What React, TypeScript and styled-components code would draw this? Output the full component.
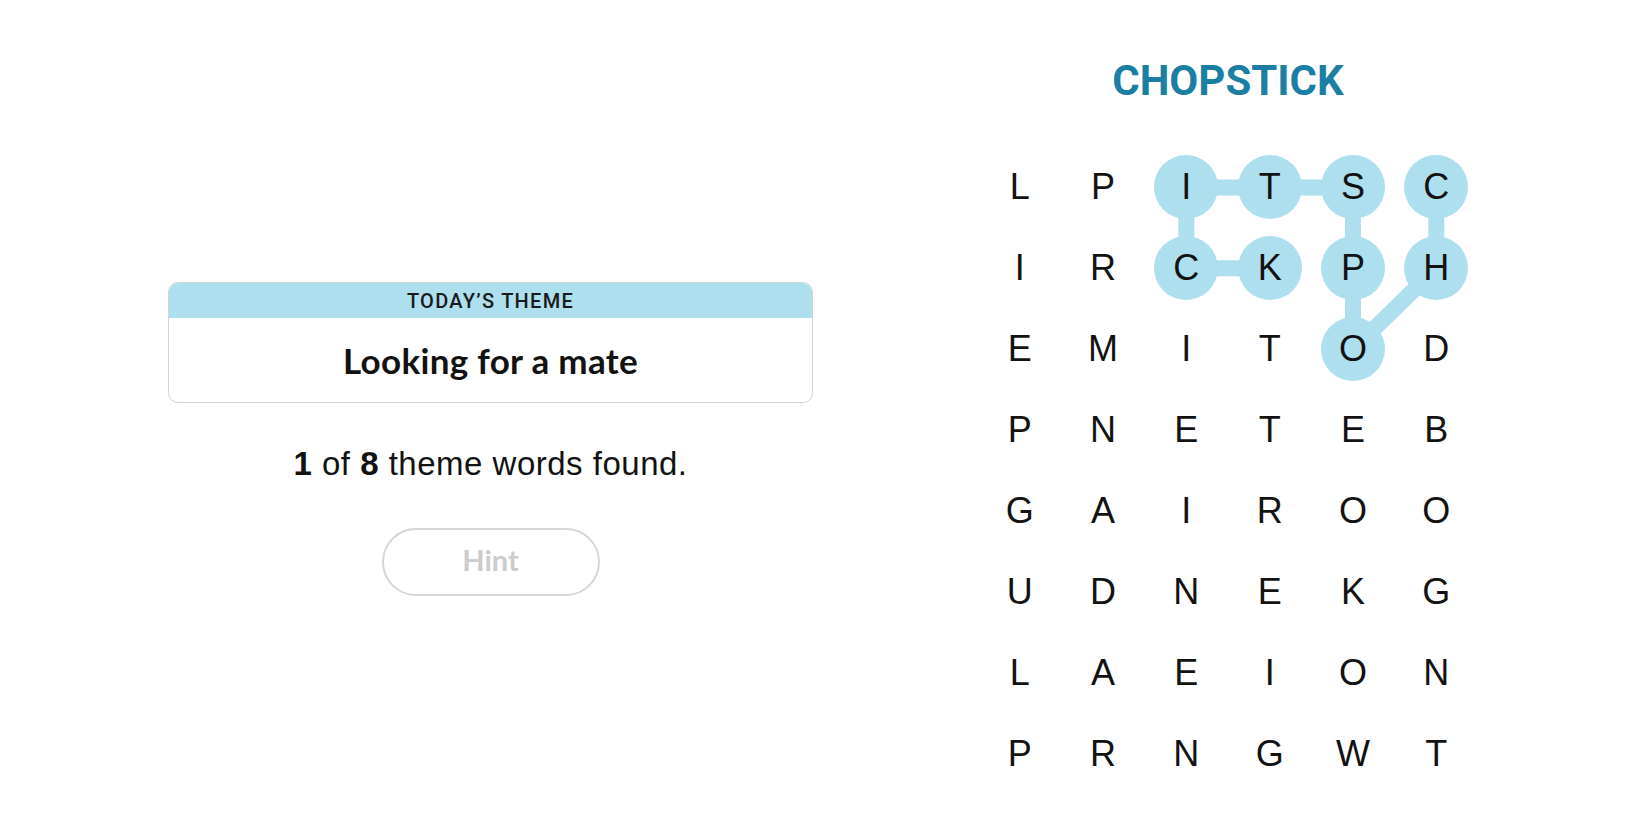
import React from "react"
import styled, { createGlobalStyle } from "styled-components"

const COL_W = 83.33
const ROW_H = 80.9

const grid = [
  "LPITSC",
  "IRCKPH",
  "EMITOD",
  "PNETEB",
  "GAIROO",
  "UDNEKG",
  "LAEION",
  "PRNGWT",
]

// found word path, [col, row]
const path: [number, number][] = [
  [5, 0],
  [5, 1],
  [4, 2],
  [4, 1],
  [4, 0],
  [3, 0],
  [2, 0],
  [2, 1],
  [3, 1],
]

const isFound = (c: number, r: number) =>
  path.some(([pc, pr]) => pc === c && pr === r)

const GlobalStyle = createGlobalStyle`
  html, body {
    margin: 0;
    padding: 0;
    background: #ffffff;
  }
  body {
    font-family: "Liberation Sans", Arial, sans-serif;
    color: #121212;
  }
`

export default function App() {
  const points = path
    .map(([c, r]) => `${COL_W / 2 + COL_W * c},${ROW_H / 2 + ROW_H * r}`)
    .join(" ")

  return (
    <>
      <GlobalStyle />
      <Page>
        <LeftColumn>
          <ThemeCard>
            <ThemeHeader>TODAY’S THEME</ThemeHeader>
            <ThemeBody>Looking for a mate</ThemeBody>
          </ThemeCard>
          <Progress>
            <b>1</b> of <b>8</b> theme words found.
          </Progress>
          <HintButton disabled>Hint</HintButton>
        </LeftColumn>

        <RightColumn>
          <CurrentWord>CHOPSTICK</CurrentWord>
          <Board>
            <Connectors viewBox={`0 0 ${COL_W * 6} ${ROW_H * 8}`}>
              <polyline
                points={points}
                fill="none"
                stroke="#aedfee"
                strokeWidth={16}
                strokeLinejoin="round"
                strokeLinecap="round"
              />
            </Connectors>
            {grid.map((row, r) =>
              row.split("").map((ch, c) => (
                <Cell key={`${r}-${c}`}>
                  <Letter $found={isFound(c, r)}>{ch}</Letter>
                </Cell>
              ))
            )}
          </Board>
        </RightColumn>
      </Page>
    </>
  )
}

const Page = styled.div`
  display: flex;
  align-items: flex-start;
  gap: 165px;
  padding-left: 168px;
  min-height: 825px;
  box-sizing: border-box;
`

const LeftColumn = styled.div`
  width: 645px;
  margin-top: 282px;
  display: flex;
  flex-direction: column;
  align-items: center;
`

const ThemeCard = styled.div`
  width: 100%;
  border: 1px solid #d3d3d3;
  border-radius: 10px;
  overflow: hidden;
  box-sizing: border-box;
`

const ThemeHeader = styled.div`
  height: 35px;
  background: #aedfee;
  display: flex;
  align-items: center;
  justify-content: center;
  font-family: Roboto, "Liberation Sans", sans-serif;
  font-size: 20px;
  font-weight: 500;
  letter-spacing: 1.3px;
  color: #1a1a1a;
`

const ThemeBody = styled.div`
  height: 84px;
  display: flex;
  align-items: center;
  justify-content: center;
  font-family: Lato, "Liberation Sans", sans-serif;
  font-weight: 700;
  font-size: 35px;
  letter-spacing: 0.3px;
  color: #121212;
`

const Progress = styled.div`
  margin-top: 43px;
  line-height: 36px;
  font-size: 33px;
  letter-spacing: 0.5px;
  color: #121212;

  b {
    font-weight: 700;
  }
`

const HintButton = styled.button`
  margin-top: 46px;
  width: 218px;
  height: 68px;
  padding: 0 0 5px;
  border: 2px solid #d6d6d6;
  border-radius: 34px;
  background: #ffffff;
  font-family: Lato, "Liberation Sans", sans-serif;
  font-weight: 700;
  font-size: 29px;
  color: #cccccc;
  cursor: default;
`

const RightColumn = styled.div`
  display: flex;
  flex-direction: column;
  align-items: center;
  padding-top: 56px;
`

const CurrentWord = styled.div`
  height: 50px;
  line-height: 50px;
  margin-bottom: 41px;
  font-family: Roboto, "Liberation Sans", sans-serif;
  font-weight: 700;
  font-size: 42px;
  color: #1a7fa3;
`

const Board = styled.div`
  position: relative;
  display: grid;
  grid-template-columns: repeat(6, ${COL_W}px);
  grid-template-rows: repeat(8, ${ROW_H}px);
`

const Connectors = styled.svg`
  position: absolute;
  inset: 0;
  width: 100%;
  height: 100%;
  z-index: 0;
`

const Cell = styled.div`
  position: relative;
  z-index: 1;
  display: flex;
  align-items: center;
  justify-content: center;
`

const Letter = styled.span<{ $found: boolean }>`
  width: 64px;
  height: 64px;
  border-radius: 50%;
  display: flex;
  align-items: center;
  justify-content: center;
  background: ${({ $found }) => ($found ? "#aedfee" : "transparent")};
  font-size: 36px;
  color: #121212;
`
